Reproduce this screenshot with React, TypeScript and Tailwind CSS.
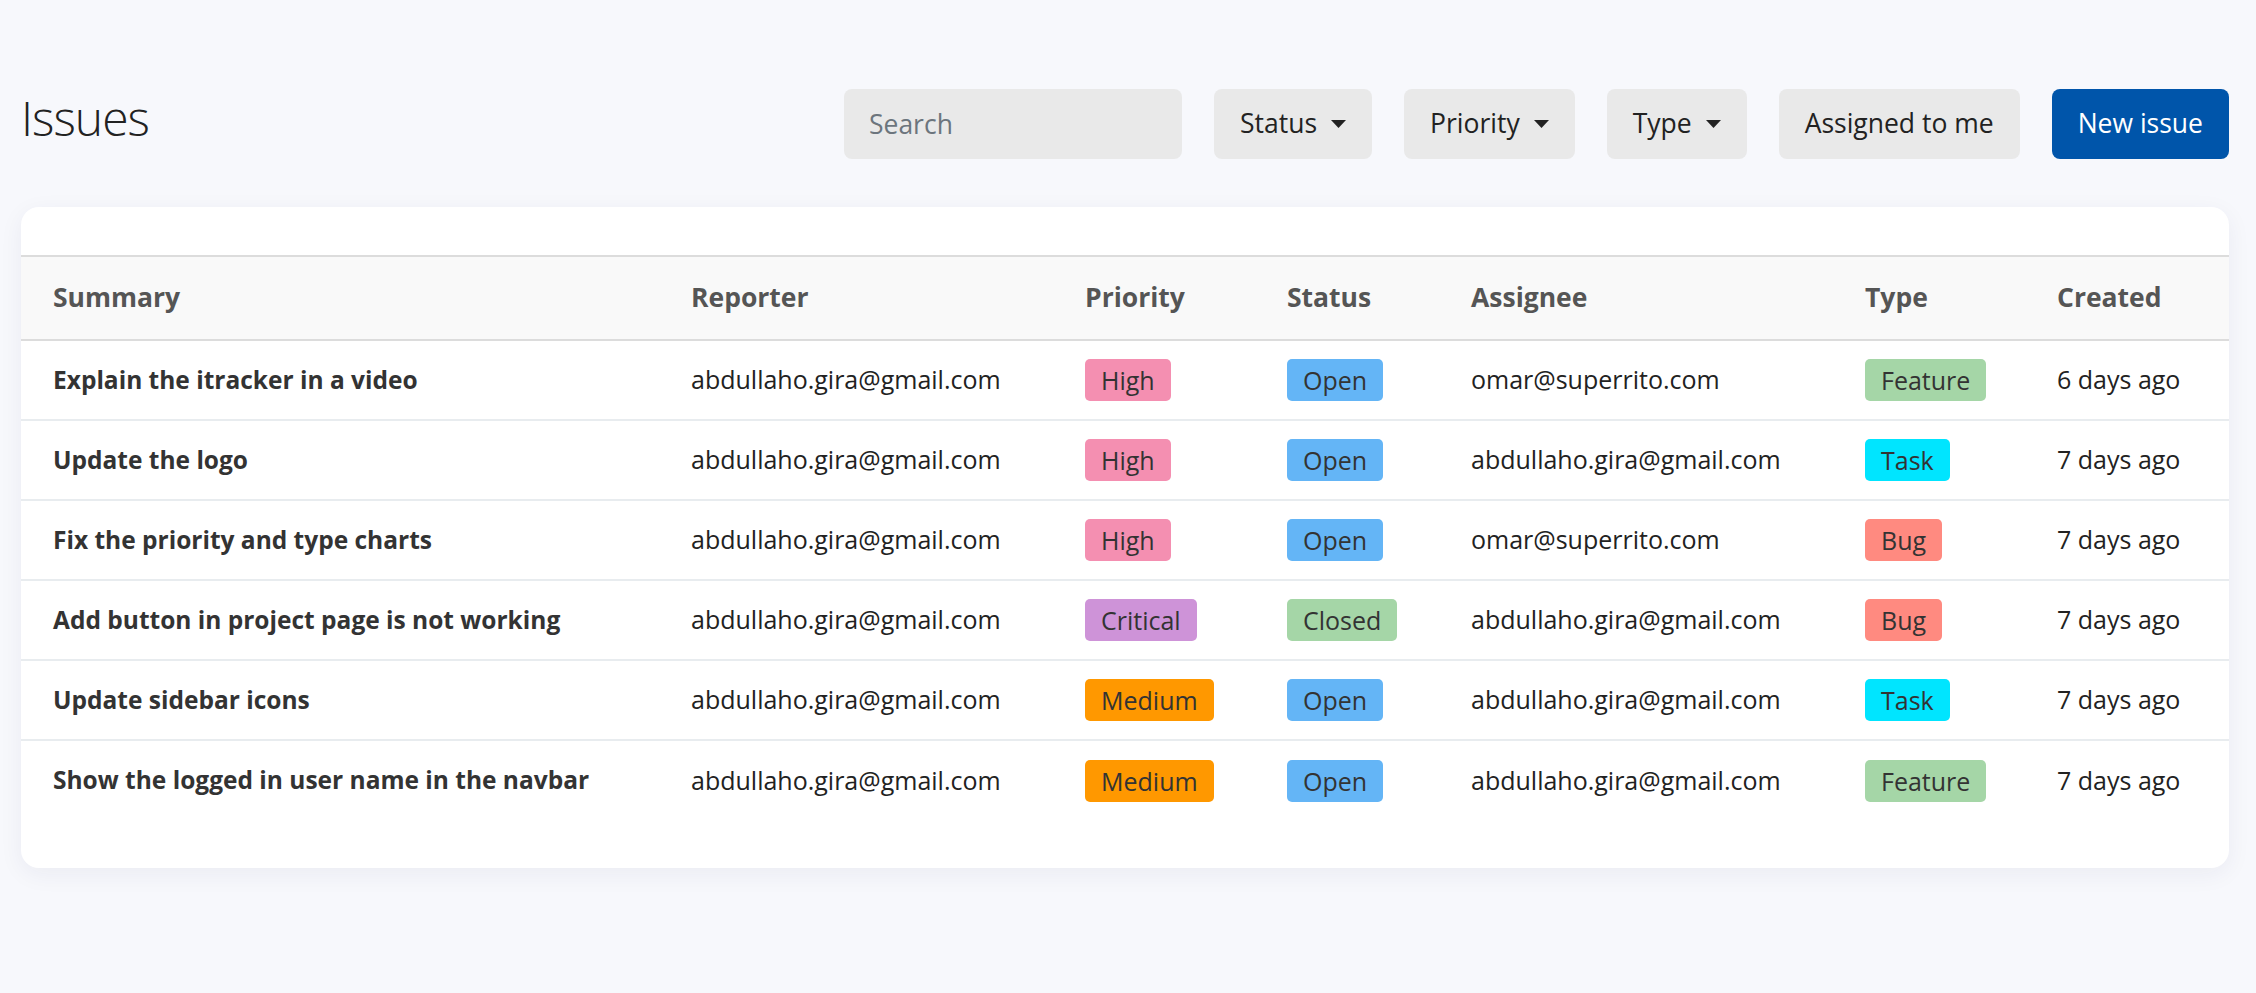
import React from "react";

type Row = {
  summary: string;
  reporter: string;
  priority: string;
  status: string;
  assignee: string;
  type: string;
  created: string;
};

const rows: Row[] = [
  { summary: "Explain the itracker in a video", reporter: "abdullaho.gira@gmail.com", priority: "High", status: "Open", assignee: "omar@superrito.com", type: "Feature", created: "6 days ago" },
  { summary: "Update the logo", reporter: "abdullaho.gira@gmail.com", priority: "High", status: "Open", assignee: "abdullaho.gira@gmail.com", type: "Task", created: "7 days ago" },
  { summary: "Fix the priority and type charts", reporter: "abdullaho.gira@gmail.com", priority: "High", status: "Open", assignee: "omar@superrito.com", type: "Bug", created: "7 days ago" },
  { summary: "Add button in project page is not working", reporter: "abdullaho.gira@gmail.com", priority: "Critical", status: "Closed", assignee: "abdullaho.gira@gmail.com", type: "Bug", created: "7 days ago" },
  { summary: "Update sidebar icons", reporter: "abdullaho.gira@gmail.com", priority: "Medium", status: "Open", assignee: "abdullaho.gira@gmail.com", type: "Task", created: "7 days ago" },
  { summary: "Show the logged in user name in the navbar", reporter: "abdullaho.gira@gmail.com", priority: "Medium", status: "Open", assignee: "abdullaho.gira@gmail.com", type: "Feature", created: "7 days ago" },
];

const badgeColor: Record<string, string> = {
  High: "bg-[#f48fb1]",
  Critical: "bg-[#ce93d8]",
  Medium: "bg-[#ff9800]",
  Open: "bg-[#64b5f6]",
  Closed: "bg-[#a5d6a7]",
  Feature: "bg-[#a5d6a7]",
  Task: "bg-[#00e5ff]",
  Bug: "bg-[#ff8a80]",
};

function Badge({ label }: { label: string }) {
  return (
    <span
      className={`inline-block h-[42px] rounded-[5px] px-[16px] text-[25px] leading-[42px] text-[#333] ${badgeColor[label]}`}
    >
      {label}
    </span>
  );
}

function Caret() {
  return (
    <svg width="15" height="8" viewBox="0 0 15 8" className="ml-[14px]">
      <path d="M0 0 L15 0 L7.5 8 Z" fill="#222" />
    </svg>
  );
}

function Dropdown({ label }: { label: string }) {
  return (
    <button className="flex h-[70px] items-center rounded-[8px] bg-[#e9e9e9] px-[26px] text-[26.5px] text-[#222]">
      {label}
      <Caret />
    </button>
  );
}

export default function App() {
  return (
    <div
      className="min-h-screen bg-[#f7f8fc] pb-[40px] pl-[21px] pr-[27px] pt-[89px]"
      style={{ fontFamily: '"Open Sans", "Noto Sans", sans-serif' }}
    >
      <div className="flex h-[70px] items-center justify-between">
        <h1 className="mb-[12px] text-[48px] font-light leading-none tracking-[-1px] text-[#222]">Issues</h1>
        <div className="flex items-center gap-[32px]">
          <input
            placeholder="Search"
            className="h-[70px] w-[338px] rounded-[8px] bg-[#e9e9e9] px-[25px] text-[26.5px] text-[#222] outline-none placeholder:text-[#6c757d]"
          />
          <Dropdown label="Status" />
          <Dropdown label="Priority" />
          <Dropdown label="Type" />
          <button className="h-[70px] rounded-[8px] bg-[#e9e9e9] px-[26px] text-[26.5px] text-[#222]">
            Assigned to me
          </button>
          <button className="h-[70px] rounded-[8px] bg-[#0055aa] px-[26px] text-[26.5px] text-white">
            New issue
          </button>
        </div>
      </div>

      <div className="mt-[48px] rounded-[18px] bg-white py-[48px] shadow-[0_6px_24px_rgba(30,40,80,0.06)]">
        <table className="w-full table-fixed border-collapse text-left text-[25px]">
          <colgroup>
            <col className="w-[638px]" />
            <col className="w-[394px]" />
            <col className="w-[202px]" />
            <col className="w-[184px]" />
            <col className="w-[394px]" />
            <col className="w-[192px]" />
            <col />
          </colgroup>
          <thead>
            <tr className="h-[84px] border-y-2 border-[#dcdcdc] bg-[#f9f9f9]">
              {["Summary", "Reporter", "Priority", "Status", "Assignee", "Type", "Created"].map((h) => (
                <th key={h} className="pl-[32px] text-[26.5px] font-bold text-[#555]">
                  {h}
                </th>
              ))}
            </tr>
          </thead>
          <tbody>
            {rows.map((r, i) => (
              <tr
                key={i}
                className={`h-[80px] ${i < rows.length - 1 ? "border-b-2 border-[#e8ecef]" : ""}`}
              >
                <td className="whitespace-nowrap pl-[32px] text-[24.5px] font-bold text-[#333]">{r.summary}</td>
                <td className="whitespace-nowrap pl-[32px] text-[#222]">{r.reporter}</td>
                <td className="pl-[32px]">
                  <Badge label={r.priority} />
                </td>
                <td className="pl-[32px]">
                  <Badge label={r.status} />
                </td>
                <td className="whitespace-nowrap pl-[32px] text-[#222]">{r.assignee}</td>
                <td className="pl-[32px]">
                  <Badge label={r.type} />
                </td>
                <td className="whitespace-nowrap pl-[32px] text-[#222]">{r.created}</td>
              </tr>
            ))}
          </tbody>
        </table>
      </div>
    </div>
  );
}
